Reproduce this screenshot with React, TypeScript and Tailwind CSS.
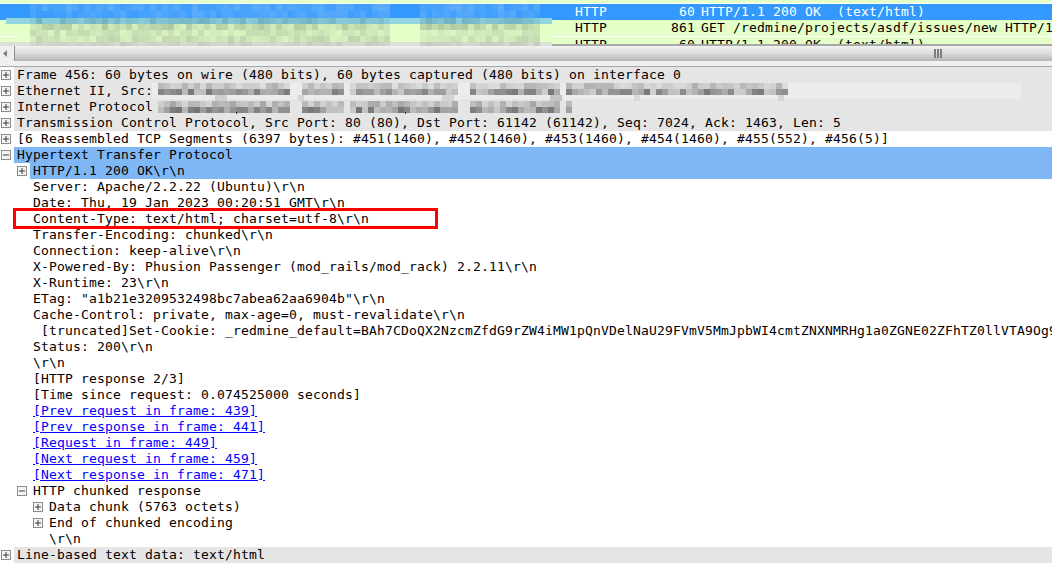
import React from 'react';

const mono = 'font-["DejaVu_Sans_Mono",monospace] text-[13px] tracking-[0.174px] leading-4 whitespace-pre';

type Detail = {
  level: number;
  text: string;
  icon?: 'plus' | 'minus';
  kind?: 'gray' | 'selected' | 'link';
};

const details: Detail[] = [
  { level: 0, icon: 'plus', kind: 'gray', text: 'Frame 456: 60 bytes on wire (480 bits), 60 bytes captured (480 bits) on interface 0' },
  { level: 0, icon: 'plus', kind: 'gray', text: 'Ethernet II, Src:' },
  { level: 0, icon: 'plus', kind: 'gray', text: 'Internet Protocol' },
  { level: 0, icon: 'plus', kind: 'gray', text: 'Transmission Control Protocol, Src Port: 80 (80), Dst Port: 61142 (61142), Seq: 7024, Ack: 1463, Len: 5' },
  { level: 0, icon: 'plus', text: '[6 Reassembled TCP Segments (6397 bytes): #451(1460), #452(1460), #453(1460), #454(1460), #455(552), #456(5)]' },
  { level: 0, icon: 'minus', kind: 'selected', text: 'Hypertext Transfer Protocol' },
  { level: 1, icon: 'plus', kind: 'selected', text: 'HTTP/1.1 200 OK\\r\\n' },
  { level: 1, text: 'Server: Apache/2.2.22 (Ubuntu)\\r\\n' },
  { level: 1, text: 'Date: Thu, 19 Jan 2023 00:20:51 GMT\\r\\n' },
  { level: 1, text: 'Content-Type: text/html; charset=utf-8\\r\\n' },
  { level: 1, text: 'Transfer-Encoding: chunked\\r\\n' },
  { level: 1, text: 'Connection: keep-alive\\r\\n' },
  { level: 1, text: 'X-Powered-By: Phusion Passenger (mod_rails/mod_rack) 2.2.11\\r\\n' },
  { level: 1, text: 'X-Runtime: 23\\r\\n' },
  { level: 1, text: 'ETag: "a1b21e3209532498bc7abea62aa6904b"\\r\\n' },
  { level: 1, text: 'Cache-Control: private, max-age=0, must-revalidate\\r\\n' },
  { level: 1, text: ' [truncated]Set-Cookie: _redmine_default=BAh7CDoQX2NzcmZfdG9rZW4iMW1pQnVDelNaU29FVmV5MmJpbWI4cmtZNXNMRHg1a0ZGNE02ZFhTZ0llVTA9Og9' },
  { level: 1, text: 'Status: 200\\r\\n' },
  { level: 1, text: '\\r\\n' },
  { level: 1, text: '[HTTP response 2/3]' },
  { level: 1, text: '[Time since request: 0.074525000 seconds]' },
  { level: 1, kind: 'link', text: '[Prev request in frame: 439]' },
  { level: 1, kind: 'link', text: '[Prev response in frame: 441]' },
  { level: 1, kind: 'link', text: '[Request in frame: 449]' },
  { level: 1, kind: 'link', text: '[Next request in frame: 459]' },
  { level: 1, kind: 'link', text: '[Next response in frame: 471]' },
  { level: 1, icon: 'minus', text: 'HTTP chunked response' },
  { level: 2, icon: 'plus', text: 'Data chunk (5763 octets)' },
  { level: 2, icon: 'plus', text: 'End of chunked encoding' },
  { level: 2, text: '\\r\\n' },
  { level: 0, icon: 'plus', kind: 'gray', text: 'Line-based text data: text/html' },
];

const Expander = ({ type }: { type: 'plus' | 'minus' }) => (
  <svg width="10" height="10" viewBox="0 0 10 10" className="block">
    <rect x="0.5" y="0.5" width="9" height="9" fill="#f4f4f4" stroke="#8c8c8c" />
    <path d="M2 5h6" stroke="#3c3c3c" />
    {type === 'plus' && <path d="M5 2v6" stroke="#3c3c3c" />}
  </svg>
);

const DetailRow = ({ row }: { row: Detail }) => {
  const bg =
    row.kind === 'gray' ? 'bg-[#e5e5e5]' : row.kind === 'selected' ? 'bg-[#7fb7f5]' : '';
  return (
    <div className="flex h-4" style={{ paddingLeft: row.level * 16 }}>
      <div className="flex w-[14px] shrink-0 items-center pl-[1px]">
        {row.icon && <Expander type={row.icon} />}
      </div>
      <div className={`min-w-0 flex-1 overflow-hidden pl-[3px] text-black ${bg} ${mono}`}>
        {row.kind === 'link' ? (
          <span className="text-[#0000ff] underline">{row.text}</span>
        ) : (
          row.text
        )}
      </div>
    </div>
  );
};

// small seeded generator so the redacted mosaics stay the same between runs
const makeRandom = (seed: number) => {
  let s = seed;
  return () => {
    s = (s * 16807) % 2147483647;
    return (s % 1000) / 1000;
  };
};

type Rgb = [number, number, number];
const mix = (a: Rgb, b: Rgb, t: number) =>
  `rgb(${a.map((v, i) => Math.round(v + (b[i] - v) * t)).join(',')})`;

type Band = { y: number; h: number; from: Rgb; to: Rgb; x0: number; x1: number };
type Extra = { x: number; y: number; w: number; h: number; fill: string };

const Mosaic = ({ width, height, top, bands, seed, gaps, extras = [] }: {
  width: number;
  height: number;
  top: number;
  bands: Band[];
  seed: number;
  gaps: [number, number][];
  extras?: Extra[];
}) => {
  const rand = makeRandom(seed);
  const cells: React.ReactNode[] = [];
  bands.forEach((b, bi) => {
    for (let x = b.x0; x < b.x1; x += 6) {
      const clean = gaps.some(([g0, g1]) => x >= g0 && x < g1);
      const t = clean ? 0 : 0.25 + rand() * 0.75;
      cells.push(<rect key={`${bi}-${x}`} x={x} y={b.y} width="6" height={b.h} fill={mix(b.from, b.to, t)} />);
    }
  });
  return (
    <svg width={width} height={height} className="absolute left-0" style={{ top }} shapeRendering="crispEdges">
      {cells}
      {extras.map((e, i) => (
        <rect key={i} x={e.x} y={e.y} width={e.w} height={e.h} fill={e.fill} />
      ))}
    </svg>
  );
};

const green: Rgb = [228, 255, 199];
const blue: Rgb = [51, 153, 255];

const PacketRow = ({ proto, len, info, selected }: { proto: string; len: string; info: string; selected?: boolean }) => (
  <div className={`flex h-4 ${selected ? 'bg-[#3399ff] text-white' : 'bg-[#e4ffc7] text-black'} ${mono}`}>
    <div className="ml-[575px] w-[64px]">{proto}</div>
    <div className="w-[56px] text-right">{len}</div>
    <div className="ml-[6px] flex-1 overflow-hidden">{info}</div>
  </div>
);

export default function App() {
  const listBands: Band[] = [
    { y: 4, h: 7, from: blue, to: [92, 172, 250], x0: 0, x1: 552 },
    { y: 11, h: 7, from: blue, to: [88, 170, 252], x0: 0, x1: 552 },
    { y: 18, h: 6, from: [146, 212, 224], to: [112, 178, 192], x0: 6, x1: 552 },
    { y: 24, h: 6, from: green, to: [178, 202, 162], x0: 24, x1: 552 },
    { y: 30, h: 6, from: green, to: [196, 220, 178], x0: 24, x1: 552 },
    { y: 36, h: 6, from: green, to: [190, 212, 174], x0: 18, x1: 552 },
    { y: 42, h: 4, from: [220, 224, 212], to: [196, 202, 190], x0: 0, x1: 552 },
  ];
  const ethBands: Band[] = [
    { y: 0, h: 6, from: [236, 236, 236], to: [176, 176, 176], x0: 158, x1: 784 },
    { y: 6, h: 6, from: [236, 236, 236], to: [120, 120, 120], x0: 158, x1: 784 },
    { y: 18, h: 6, from: [229, 229, 229], to: [166, 166, 166], x0: 158, x1: 568 },
    { y: 24, h: 6, from: [229, 229, 229], to: [115, 115, 115], x0: 158, x1: 568 },
  ];
  // stray blocks below the first redacted line, and the two commas left in the address line
  const ethExtras: Extra[] = [
    { x: 215, y: 12, w: 12, h: 6, fill: '#cfcfcf' },
    { x: 298, y: 12, w: 6, h: 6, fill: '#d4d4d4' },
    { x: 442, y: 12, w: 12, h: 6, fill: '#d4d4d4' },
    { x: 550, y: 12, w: 12, h: 6, fill: '#c4c4c4' },
    { x: 634, y: 12, w: 6, h: 6, fill: '#d8d8d8' },
    { x: 778, y: 12, w: 6, h: 6, fill: '#d4d4d4' },
    { x: 236, y: 29, w: 1, h: 2, fill: '#303030' },
    { x: 405, y: 29, w: 1, h: 2, fill: '#303030' },
  ];

  return (
    <div className="relative flex h-[582px] w-[1052px] flex-col overflow-hidden bg-white">
      {/* packet list, scrolled so only parts of the rows show */}
      <div className="h-[46px] shrink-0 overflow-hidden border-b-2 border-[#a8a8a8] bg-[#e4ffc7]">
        <div className="h-[3px]" />
        <div className="h-px bg-white" />
        <PacketRow selected proto="HTTP" len="60" info="HTTP/1.1 200 OK  (text/html)" />
        <PacketRow proto="HTTP" len="861" info="GET /redmine/projects/asdf/issues/new HTTP/1.1" />
        <div className="h-px bg-white" />
        <PacketRow proto="HTTP" len="60" info="HTTP/1.1 200 OK  (text/html)" />
      </div>

      {/* horizontal scrollbar */}
      <div className="flex h-[15px] shrink-0">
        <div className="flex w-[15px] items-center border-r border-[#909090] bg-[#efefef] pl-[3px]">
          <svg width="5" height="7" viewBox="0 0 5 7">
            <path d="M4 0v7L0 3.5z" fill="#808080" />
          </svg>
        </div>
        <div className="flex flex-1 items-center bg-gradient-to-b from-[#f2f2f2] via-[#dcdcdc] to-[#b4b4b4] pl-[918px]">
          <svg width="10" height="9" viewBox="0 0 10 9" shapeRendering="crispEdges">
            <path d="M1 0h2v9H1zM4 0h2v9H4zM7 0h2v9H7z" fill="#7c7c7c" />
          </svg>
        </div>
      </div>

      <div className="h-[6px] shrink-0 border-b border-[#a8a8a8] bg-[#f0f0f0]" />

      {/* packet details tree */}
      <div className="relative flex-1">
        {details.map((row, i) => (
          <DetailRow key={i} row={row} />
        ))}
        <div className="absolute left-[152px] top-[16px] h-4 w-[870px] bg-[#ececec]" />
        <div className="absolute left-[13px] top-[141px] h-[21px] w-[425px] border-[3px] border-[#ff0000]" />
        <Mosaic
          width={800}
          height={32}
          top={16}
          bands={ethBands}
          seed={4711}
          gaps={[[290, 298], [458, 470], [560, 566], [344, 350]]}
          extras={ethExtras}
        />
      </div>

      <Mosaic
        width={552}
        height={46}
        top={0}
        bands={listBands}
        seed={9137}
        gaps={[[0, 30], [385, 415], [540, 552]]}
      />
    </div>
  );
}
